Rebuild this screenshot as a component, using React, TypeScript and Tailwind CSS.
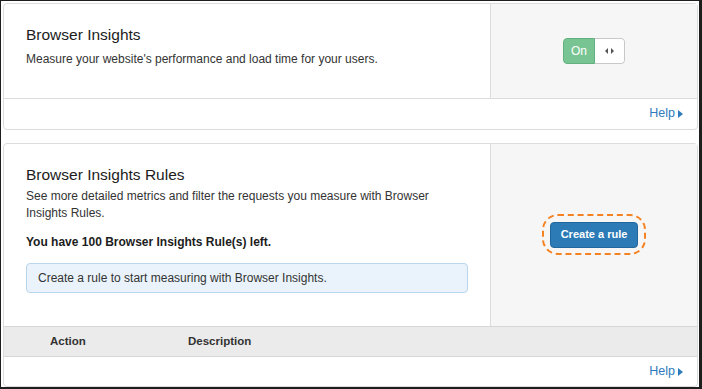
import React from "react";

const font = { fontFamily: '"Liberation Sans", Arial, sans-serif' };

function HelpFooter() {
  return (
    <div className="flex h-[29px] items-center justify-end pr-[13px]">
      <a className="flex items-center text-[12.5px] text-[#2f7bbd]">
        Help
        <svg width="6" height="8" viewBox="0 0 6 8" className="ml-[3px]">
          <path d="M0 0 L5 4 L0 8 Z" fill="#2f7bbd" />
        </svg>
      </a>
    </div>
  );
}

export default function App() {
  return (
    <div
      className="w-[702px] h-[389px] bg-white border-t border-l border-r-[3px] border-b-[2px] border-[#1e1e1e] pt-[2px] pl-[2px] pr-[1px] overflow-hidden text-[#333333]"
      style={font}
    >
      {/* Card 1 */}
      <div className="h-[127px] border border-[#dcdcdc] rounded-[4px] flex flex-col">
        <div className="flex h-[95px] border-b border-[#dcdcdc]">
          <div className="w-[486px] pl-[22px] pt-[20px]">
            <div className="text-[15.5px] leading-[22px] text-[#1c1c1c]">Browser Insights</div>
            <div className="text-[12px] leading-[18px] mt-[4px]">
              Measure your website's performance and load time for your users.
            </div>
          </div>
          <div className="flex-1 bg-[#f6f6f6] border-l border-[#dcdcdc] flex items-center justify-center">
            <div className="flex h-[26px] rounded-[4px] overflow-hidden">
              <div className="w-[32px] bg-[#78c593] border border-[#62b07d] rounded-l-[4px] flex items-center justify-center text-white text-[12px]">
                On
              </div>
              <div className="w-[30px] bg-white border border-l-0 border-[#c8c8c8] rounded-r-[4px] flex items-center justify-center">
                <svg width="9" height="6" viewBox="0 0 9 6">
                  <path d="M3 0 L0 3 L3 6 Z" fill="#555" />
                  <path d="M6 0 L9 3 L6 6 Z" fill="#555" />
                </svg>
              </div>
            </div>
          </div>
        </div>
        <HelpFooter />
      </div>

      {/* Card 2 */}
      <div className="mt-[13px] h-[244px] border border-[#dcdcdc] rounded-[4px] flex flex-col">
        <div className="flex h-[183px]">
          <div className="w-[486px] pl-[22px] pt-[20px]">
            <div className="text-[15.5px] leading-[22px] text-[#1c1c1c]">Browser Insights Rules</div>
            <div className="text-[12px] leading-[17px] mt-[2px] pr-[40px]">
              See more detailed metrics and filter the requests you measure with Browser Insights Rules.
            </div>
            <div className="text-[12px] leading-[17px] mt-[12px] font-bold text-[#1c1c1c]">
              You have 100 Browser Insights Rule(s) left.
            </div>
            <div className="mt-[12px] w-[442px] h-[30px] bg-[#eaf3fb] border border-[#b8d7ef] rounded-[4px] flex items-center pl-[11px] text-[12px]">
              Create a rule to start measuring with Browser Insights.
            </div>
          </div>
          <div className="flex-1 bg-[#f6f6f6] border-l border-[#dcdcdc] flex items-center justify-center">
            <div className="border-2 border-dashed border-[#f58220] rounded-[16px] px-[6px] py-[5px] -mt-[1px]">
              <button className="h-[26px] px-[10px] bg-[#2c7ab6] border border-[#22679c] rounded-[4px] text-white text-[11px] font-bold">
                Create a rule
              </button>
            </div>
          </div>
        </div>
        <div className="h-[31px] bg-[#ebebeb] border-y border-[#d6d6d6] flex items-center text-[11.5px] font-bold text-[#333]">
          <div className="pl-[46px] w-[184px]">Action</div>
          <div>Description</div>
        </div>
        <HelpFooter />
      </div>
    </div>
  );
}
